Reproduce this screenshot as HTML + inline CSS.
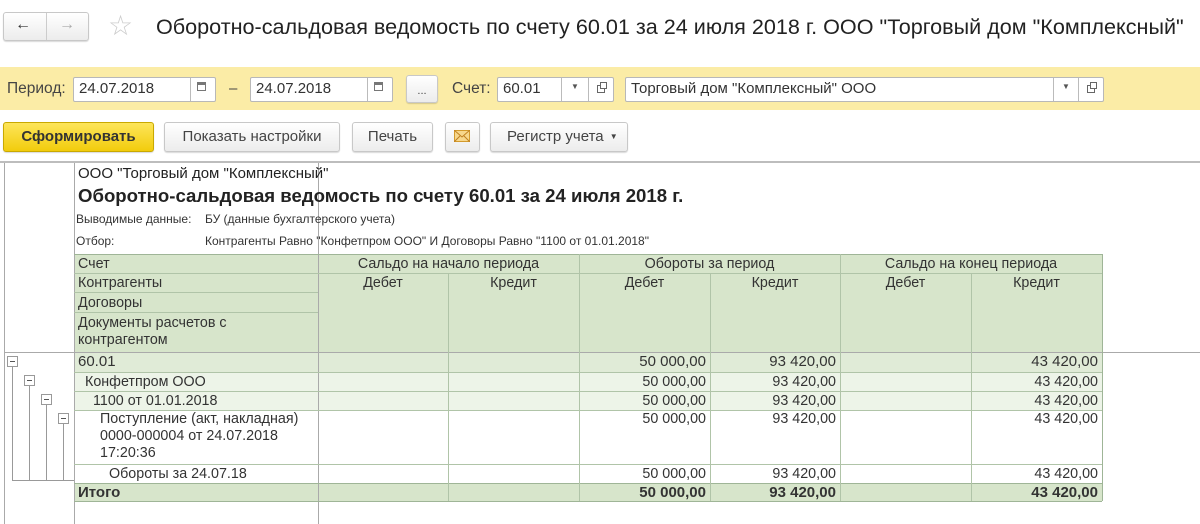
<!DOCTYPE html>
<html><head><meta charset="utf-8"><style>
*{box-sizing:border-box;margin:0;padding:0}
body{width:1200px;height:524px;overflow:hidden;background:#fff;font-family:"Liberation Sans",sans-serif;color:#333;position:relative}
.a{position:absolute}
.btn{position:absolute;border:1px solid #c8c8c8;border-radius:3px;background:linear-gradient(#fff,#ececec);box-shadow:0 1px 1px rgba(0,0,0,.15);font-size:15px;color:#444;text-align:center;line-height:27px}
.inp{position:absolute;background:#fff;border:1px solid #b8b8b8;border-radius:2px;font-size:15px;line-height:22px;padding-left:5px;color:#333}
.c{position:absolute;font-size:14.3px;line-height:17px;color:#333;overflow:hidden;white-space:nowrap}
.h{background:#d7e5cb}
.r1{background:#e0ebd7}
.r2{background:#edf4e8}
.vl{position:absolute;border-left:1px solid #b0c4a8}
.hl{position:absolute;border-top:1px solid #b0c4a8}
.num{text-align:right;padding-right:4px}
.tg{position:absolute;width:11px;height:11px;border:1px solid #999;background:#fff}
.tg:after{content:"";position:absolute;left:2px;right:2px;top:4px;border-top:1px solid #555}
.tl{position:absolute;border-left:1px solid #999}
.tb{position:absolute;border-top:1px solid #999}
</style></head><body>
<!-- nav -->
<div class="btn" style="left:3px;top:12px;width:86px;height:29px"></div>
<div class="a" style="left:46px;top:13px;height:27px;border-left:1px solid #ccc"></div>
<div class="a" style="left:15px;top:16px;font-size:16px;font-weight:bold;color:#333">←</div>
<div class="a" style="left:59px;top:16px;font-size:16px;font-weight:bold;color:#aaa">→</div>
<div class="a" style="left:108px;top:10px;font-size:28px;color:#ccc;line-height:32px">☆</div>
<div class="a" style="left:156px;top:14px;font-size:21.6px;color:#222;white-space:nowrap">Оборотно-сальдовая ведомость по счету 60.01 за 24 июля 2018 г. ООО "Торговый дом "Комплексный"</div>
<!-- yellow bar -->
<div class="a" style="left:0;top:67px;width:1200px;height:43px;background:#fbeca6"></div>
<div class="a" style="left:7px;top:80px;font-size:15.5px;color:#444">Период:</div>
<div class="inp" style="left:73px;top:77px;width:143px;height:25px">24.07.2018</div>
<div class="a" style="left:190px;top:78px;height:23px;border-left:1px solid #bbb"></div>
<div class="a" style="left:197px;top:82px;width:9px;height:9px;border:1px solid #777;border-top-width:3px"></div>
<div class="a" style="left:229px;top:80px;font-size:15px;color:#444">–</div>
<div class="inp" style="left:250px;top:77px;width:143px;height:25px">24.07.2018</div>
<div class="a" style="left:367px;top:78px;height:23px;border-left:1px solid #bbb"></div>
<div class="a" style="left:374px;top:82px;width:9px;height:9px;border:1px solid #777;border-top-width:3px"></div>
<div class="btn" style="left:406px;top:75px;width:32px;height:28px;font-size:11px;line-height:30px">...</div>
<div class="a" style="left:452px;top:80px;font-size:15.5px;color:#444">Счет:</div>
<div class="inp" style="left:497px;top:77px;width:117px;height:25px">60.01</div>
<div class="a" style="left:561px;top:78px;height:23px;border-left:1px solid #bbb"></div>
<div class="a" style="left:588px;top:78px;height:23px;border-left:1px solid #bbb"></div>
<div class="a" style="left:571px;top:82px;font-size:8px;color:#555">▼</div>
<div class="a" style="left:597px;top:85px;width:8px;height:8px;border:1px solid #666"></div>
<div class="a" style="left:600px;top:82px;width:7px;height:7px;border:1px solid #666;background:#fff"></div>
<div class="inp" style="left:625px;top:77px;width:479px;height:25px">Торговый дом "Комплексный" ООО</div>
<div class="a" style="left:1053px;top:78px;height:23px;border-left:1px solid #bbb"></div>
<div class="a" style="left:1078px;top:78px;height:23px;border-left:1px solid #bbb"></div>
<div class="a" style="left:1062px;top:82px;font-size:8px;color:#555">▼</div>
<div class="a" style="left:1087px;top:85px;width:8px;height:8px;border:1px solid #666"></div>
<div class="a" style="left:1090px;top:82px;width:7px;height:7px;border:1px solid #666;background:#fff"></div>
<!-- buttons -->
<div class="btn" style="left:3px;top:122px;width:151px;height:30px;background:linear-gradient(#fde55a,#f2cc0c);border-color:#c9a900;color:#333;font-weight:bold;font-size:15px;line-height:28px">Сформировать</div>
<div class="btn" style="left:164px;top:122px;width:176px;height:30px">Показать настройки</div>
<div class="btn" style="left:352px;top:122px;width:81px;height:30px">Печать</div>
<div class="btn" style="left:445px;top:122px;width:35px;height:30px"></div>
<div class="a" style="left:454px;top:130px;width:16px;height:12px;border:1px solid #d39a2c;background:#f7d78c"></div>
<svg class="a" style="left:454px;top:130px" width="16" height="12"><path d="M0 0L8 7L16 0M0 12L6 6M16 12L10 6" stroke="#c08020" fill="none"/></svg>
<div class="btn" style="left:490px;top:122px;width:138px;height:30px;text-align:left;padding-left:16px">Регистр учета <span style="font-size:8px;position:relative;top:-2px;left:2px">▼</span></div>
<!-- report frame -->
<div class="a" style="left:0;top:161px;width:1200px;border-top:2px solid #bdbdbd"></div>
<!-- header backgrounds -->
<div class="a h" style="left:74px;top:254px;width:1028px;height:98px"></div>
<div class="a r1" style="left:74px;top:352px;width:1028px;height:20px"></div>
<div class="a r2" style="left:74px;top:372px;width:1028px;height:38px"></div>
<div class="a h" style="left:74px;top:483px;width:1028px;height:18px"></div>
<div class="a" style="left:4px;top:163px;height:361px;border-left:1px solid #aaa"></div>
<div class="a" style="left:74px;top:163px;height:361px;border-left:1px solid #aaa"></div>
<div class="a" style="left:318px;top:163px;height:361px;border-left:1px solid #aaa"></div>
<div class="a" style="left:4px;top:352px;width:1196px;border-top:1px solid #aaa"></div>
<div class="a" style="left:78px;top:165px;font-size:15px;color:#222;white-space:nowrap">ООО "Торговый дом "Комплексный"</div>
<div class="a" style="left:78px;top:185px;font-size:18.6px;font-weight:bold;color:#222;white-space:nowrap">Оборотно-сальдовая ведомость по счету 60.01 за 24 июля 2018 г.</div>
<div class="a" style="left:76px;top:212px;font-size:12px;color:#333">Выводимые данные:</div>
<div class="a" style="left:205px;top:212px;font-size:12px;color:#333">БУ (данные бухгалтерского учета)</div>
<div class="a" style="left:76px;top:234px;font-size:12px;color:#333">Отбор:</div>
<div class="a" style="left:205px;top:234px;font-size:12px;color:#333;white-space:nowrap">Контрагенты Равно "Конфетпром ООО" И Договоры Равно "1100 от 01.01.2018"</div>
<!-- lines -->
<div class="hl" style="left:74px;top:254px;width:1028px;border-color:#9fb597"></div>
<div class="hl" style="left:74px;top:273px;width:1028px"></div>
<div class="hl" style="left:74px;top:292px;width:244px"></div>
<div class="hl" style="left:74px;top:312px;width:244px"></div>
<div class="hl" style="left:74px;top:372px;width:1028px"></div>
<div class="hl" style="left:74px;top:391px;width:1028px"></div>
<div class="hl" style="left:74px;top:410px;width:1028px"></div>
<div class="hl" style="left:74px;top:464px;width:1028px"></div>
<div class="hl" style="left:74px;top:483px;width:1028px;border-color:#9fb597"></div>
<div class="hl" style="left:74px;top:501px;width:1028px;border-color:#9fb597"></div>
<div class="vl" style="left:579px;top:254px;height:247px"></div>
<div class="vl" style="left:840px;top:254px;height:247px"></div>
<div class="vl" style="left:448px;top:273px;height:228px"></div>
<div class="vl" style="left:710px;top:273px;height:228px"></div>
<div class="vl" style="left:971px;top:273px;height:228px"></div>
<div class="vl" style="left:1102px;top:254px;height:247px;border-color:#9fb597"></div>
<!-- header text -->
<div class="c" style="left:78px;top:256px">Счет</div>
<div class="c" style="left:78px;top:275px">Контрагенты</div>
<div class="c" style="left:78px;top:295px">Договоры</div>
<div class="c" style="left:78px;top:315px;white-space:normal;width:210px">Документы расчетов с контрагентом</div>
<div class="c" style="left:318px;top:256px;width:261px;text-align:center">Сальдо на начало периода</div>
<div class="c" style="left:579px;top:256px;width:261px;text-align:center">Обороты за период</div>
<div class="c" style="left:840px;top:256px;width:262px;text-align:center">Сальдо на конец периода</div>
<div class="c" style="left:318px;top:275px;width:130px;text-align:center">Дебет</div>
<div class="c" style="left:448px;top:275px;width:131px;text-align:center">Кредит</div>
<div class="c" style="left:579px;top:275px;width:131px;text-align:center">Дебет</div>
<div class="c" style="left:710px;top:275px;width:130px;text-align:center">Кредит</div>
<div class="c" style="left:840px;top:275px;width:131px;text-align:center">Дебет</div>
<div class="c" style="left:971px;top:275px;width:131px;text-align:center">Кредит</div>
<!-- rows -->
<div class="c" style="left:78px;top:353px;font-size:15px">60.01</div>
<div class="c" style="left:85px;top:374px">Конфетпром ООО</div>
<div class="c" style="left:93px;top:393px">1100 от 01.01.2018</div>
<div class="c" style="left:100px;top:411px;white-space:normal;width:215px">Поступление (акт, накладная) 0000-000004 от 24.07.2018 17:20:36</div>
<div class="c" style="left:109px;top:466px">Обороты за 24.07.18</div>
<div class="c" style="left:78px;top:484px;font-weight:bold;font-size:15px">Итого</div>
<!-- numbers -->
<div class="c num" style="left:579px;top:353px;width:131px;font-size:15px">50 000,00</div>
<div class="c num" style="left:710px;top:353px;width:130px;font-size:15px">93 420,00</div>
<div class="c num" style="left:971px;top:353px;width:131px;font-size:15px">43 420,00</div>
<div class="c num" style="left:579px;top:374px;width:131px">50 000,00</div>
<div class="c num" style="left:710px;top:374px;width:130px">93 420,00</div>
<div class="c num" style="left:971px;top:374px;width:131px">43 420,00</div>
<div class="c num" style="left:579px;top:393px;width:131px">50 000,00</div>
<div class="c num" style="left:710px;top:393px;width:130px">93 420,00</div>
<div class="c num" style="left:971px;top:393px;width:131px">43 420,00</div>
<div class="c num" style="left:579px;top:411px;width:131px">50 000,00</div>
<div class="c num" style="left:710px;top:411px;width:130px">93 420,00</div>
<div class="c num" style="left:971px;top:411px;width:131px">43 420,00</div>
<div class="c num" style="left:579px;top:466px;width:131px">50 000,00</div>
<div class="c num" style="left:710px;top:466px;width:130px">93 420,00</div>
<div class="c num" style="left:971px;top:466px;width:131px">43 420,00</div>
<div class="c num" style="left:579px;top:484px;width:131px;font-weight:bold;font-size:15px">50 000,00</div>
<div class="c num" style="left:710px;top:484px;width:130px;font-weight:bold;font-size:15px">93 420,00</div>
<div class="c num" style="left:971px;top:484px;width:131px;font-weight:bold;font-size:15px">43 420,00</div>
<!-- tree -->
<div class="tl" style="left:12px;top:367px;height:113px"></div>
<div class="tl" style="left:29px;top:386px;height:94px"></div>
<div class="tl" style="left:46px;top:405px;height:75px"></div>
<div class="tl" style="left:63px;top:424px;height:56px"></div>
<div class="tb" style="left:12px;top:480px;width:62px"></div>
<div class="tg" style="left:7px;top:356px"></div>
<div class="tg" style="left:24px;top:375px"></div>
<div class="tg" style="left:41px;top:394px"></div>
<div class="tg" style="left:58px;top:413px"></div>
</body></html>
